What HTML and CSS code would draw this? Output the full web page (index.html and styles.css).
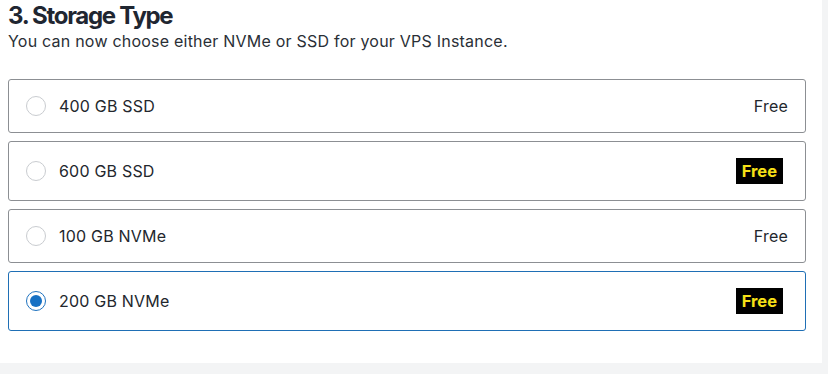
FILE: index.html
```html
<!DOCTYPE html>
<html>
<head>
<meta charset="utf-8">
<link rel="stylesheet" href="styles.css">
</head>
<body>
<div class="page">
  <section class="panel">
    <h2 class="title">3. Storage Type</h2>
    <p class="subtitle">You can now choose either NVMe or SSD for your VPS Instance.</p>
    <div class="options">
      <label class="option">
        <span class="radio"></span>
        <span class="name">400 GB SSD</span>
        <span class="price">Free</span>
      </label>
      <label class="option">
        <span class="radio"></span>
        <span class="name">600 GB SSD</span>
        <span class="badge">Free</span>
      </label>
      <label class="option">
        <span class="radio"></span>
        <span class="name">100 GB NVMe</span>
        <span class="price">Free</span>
      </label>
      <label class="option selected">
        <span class="radio"></span>
        <span class="name">200 GB NVMe</span>
        <span class="badge">Free</span>
      </label>
    </div>
  </section>
</div>
</body>
</html>
```

FILE: styles.css
```css
* { box-sizing: border-box; }
html, body { margin: 0; padding: 0; }
body {
  background: #f3f4f5;
  font-family: Inter, "Noto Sans", sans-serif;
  color: #222832;
}
.page {
  width: 828px;
  height: 374px;
  overflow: hidden;
}
.panel {
  width: 822px;
  height: 363px;
  background: #ffffff;
  padding: 0 16px 0 8px;
}
.title {
  margin: 0;
  padding-top: 2px;
  font-size: 24px;
  line-height: 28px;
  font-weight: 700;
  letter-spacing: -1.3px;
  color: #1f2631;
}
.subtitle {
  margin: 0;
  font-size: 16px;
  line-height: 22px;
  letter-spacing: 0.22px;
  color: #2a2f36;
}
.options {
  margin-top: 27px;
  display: flex;
  flex-direction: column;
  gap: 8px;
}
.option {
  display: flex;
  align-items: center;
  border: 1px solid #8c8f93;
  border-radius: 3px;
  padding: 16px 17px 16px 17px;
  font-size: 16px;
  letter-spacing: 0.2px;
  line-height: 19px;
}
.option.selected {
  border-color: #1f6fb5;
}
.radio {
  width: 20px;
  height: 20px;
  border-radius: 50%;
  border: 1px solid #c9ccd0;
  flex: none;
  margin-right: 13px;
  display: flex;
  align-items: center;
  justify-content: center;
}
.selected .radio {
  border-color: #1f73c0;
}
.selected .radio::after {
  content: "";
  width: 12px;
  height: 12px;
  border-radius: 50%;
  background: #1570c4;
}
.name {
  flex: 1;
  color: #23272d;
}
.price {
  color: #23272d;
}
.badge {
  background: #000000;
  color: #f7e117;
  font-weight: 700;
  font-size: 16.5px;
  letter-spacing: 0;
  line-height: 20px;
  padding: 3px 6px;
  margin-right: 5px;
}
```
